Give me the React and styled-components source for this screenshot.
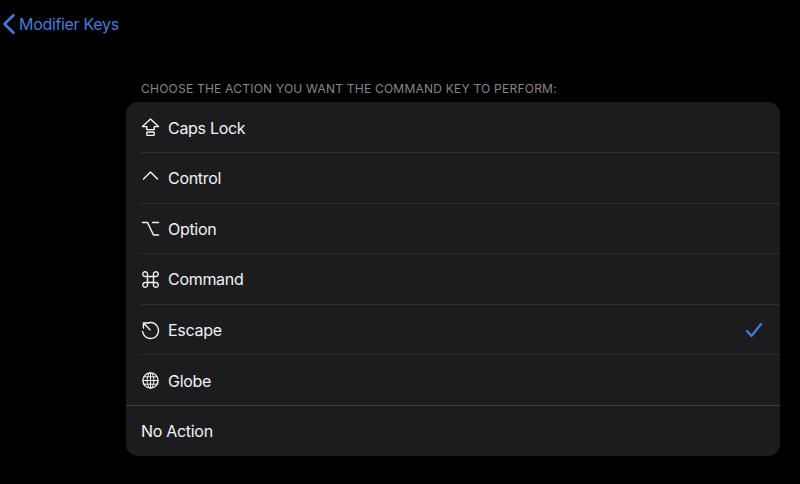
import styled, { createGlobalStyle } from "styled-components";

const Global = createGlobalStyle`
  html, body {
    margin: 0;
    height: 100%;
    background: #000;
  }
  body {
    font-family: Inter, "Liberation Sans", sans-serif;
    overflow: hidden;
  }
`;
const Page = styled.div`
  width: 800px;
  height: 484px;
  background: #000;
`;
const NavBar = styled.div`
  height: 48px;
  padding: 13px 0 0 2px;
  box-sizing: border-box;
  display: flex;
  align-items: flex-start;
  gap: 3px;
  color: #3f7fdc;
  font-size: 16px;
  line-height: 22px;
  letter-spacing: -0.32px;
`;
const Content = styled.div`
  padding: 0 20px 0 126px;
`;
const Caption = styled.div`
  margin: 32px 0 0 15px;
  height: 22px;
  color: #87878b;
  font-size: 12px;
  line-height: 17px;
  letter-spacing: 0.23px;
  text-transform: uppercase;
`;
const Card = styled.div`
  height: 354px;
  background: #1c1c1e;
  border-radius: 12px;
  display: grid;
  grid-auto-rows: 1fr;
  overflow: hidden;
`;
const Row = styled.div`
  position: relative;
  display: flex;
  align-items: center;
  gap: 8px;
  padding: 1px 17px 0 15px;
  color: #f2f2f4;
  font-size: 16px;
  letter-spacing: -0.3px;
  &:not(:first-child)::before {
    content: "";
    position: absolute;
    top: -0.4px;
    left: ${(p) => (p.$strong ? "0" : "14px")};
    right: 0;
    height: 1px;
    background: ${(p) => (p.$strong ? "#3e3e40" : "#2c2c2e")};
  }
`;
const Label = styled.span`
  flex: 1;
`;

const Icon = ({ children }) => (
  <svg width="19" height="19" viewBox="0 0 19 19" fill="none" stroke="#f2f2f4" strokeWidth="1.4" strokeLinecap="round" strokeLinejoin="round">
    {children}
  </svg>
);

const CapsIcon = () => (
  <Icon>
    <path d="M9.5 1 L17.5 8.6 H13.2 V11.6 H5.8 V8.6 H1.5 Z" />
    <rect x="5.8" y="14" width="7.4" height="3.4" rx="0.8" />
  </Icon>
);
const ControlIcon = () => (
  <Icon>
    <path d="M2.5 10 L9.5 3 L16.5 10" strokeWidth="1.5" />
  </Icon>
);
const OptionIcon = () => (
  <Icon>
    <path d="M1.5 3.5 H6.5 L12.5 16 H17.5 M11.5 3.5 H17.5" strokeWidth="1.5" />
  </Icon>
);
const CommandIcon = () => (
  <Icon>
    <path d="M6.5 6.5 H12.5 V12.5 H6.5 Z M6.5 6.5 V4.5 A2.4 2.4 0 1 0 4.1 6.5 H6.5 M12.5 6.5 V4.5 A2.4 2.4 0 1 1 14.9 6.5 H12.5 M6.5 12.5 V14.5 A2.4 2.4 0 1 1 4.1 12.5 H6.5 M12.5 12.5 V14.5 A2.4 2.4 0 1 0 14.9 12.5 H12.5" />
  </Icon>
);
const EscapeIcon = () => (
  <Icon>
    <path d="M7.5 1.8 A8 8 0 1 1 1.6 10.5" />
    <path d="M2.4 2 L9 8.8 M2.4 2 V7 M2.4 2 H7.5" />
  </Icon>
);
const GlobeIcon = () => (
  <Icon>
    <circle cx="9.5" cy="9.5" r="7.6" />
    <ellipse cx="9.5" cy="9.5" rx="3.4" ry="7.6" strokeWidth="1" />
    <path d="M9.5 2 V17 M2 9.5 H17 M3 5.8 H16 M3 13.2 H16" strokeWidth="1" />
  </Icon>
);

const rows = [
  { name: "Caps Lock", icon: <CapsIcon /> },
  { name: "Control", icon: <ControlIcon /> },
  { name: "Option", icon: <OptionIcon /> },
  { name: "Command", icon: <CommandIcon /> },
  { name: "Escape", icon: <EscapeIcon />, checked: true },
  { name: "Globe", icon: <GlobeIcon /> },
];

export default function App() {
  return (
    <Page>
      <Global />
      <NavBar>
        <svg width="14" height="22" viewBox="0 0 14 22" fill="none" stroke="#3f7fdc" strokeWidth="2.6" strokeLinecap="round" strokeLinejoin="round">
          <path d="M11.5 2.2 L2.5 11 L11.5 19.8" />
        </svg>
        Modifier Keys
      </NavBar>
      <Content>
        <Caption>Choose the action you want the command key to perform:</Caption>
        <Card>
          {rows.map((row) => (
            <Row key={row.name}>
              {row.icon}
              <Label>{row.name}</Label>
              {row.checked && (
                <svg width="18" height="16" viewBox="0 0 18 16" fill="none" stroke="#3f7fdc" strokeWidth="2.2" strokeLinecap="round" strokeLinejoin="round">
                  <path d="M2 9 L6.5 14 L16 2" />
                </svg>
              )}
            </Row>
          ))}
          <Row $strong>
            <Label>No Action</Label>
          </Row>
        </Card>
      </Content>
    </Page>
  );
}
